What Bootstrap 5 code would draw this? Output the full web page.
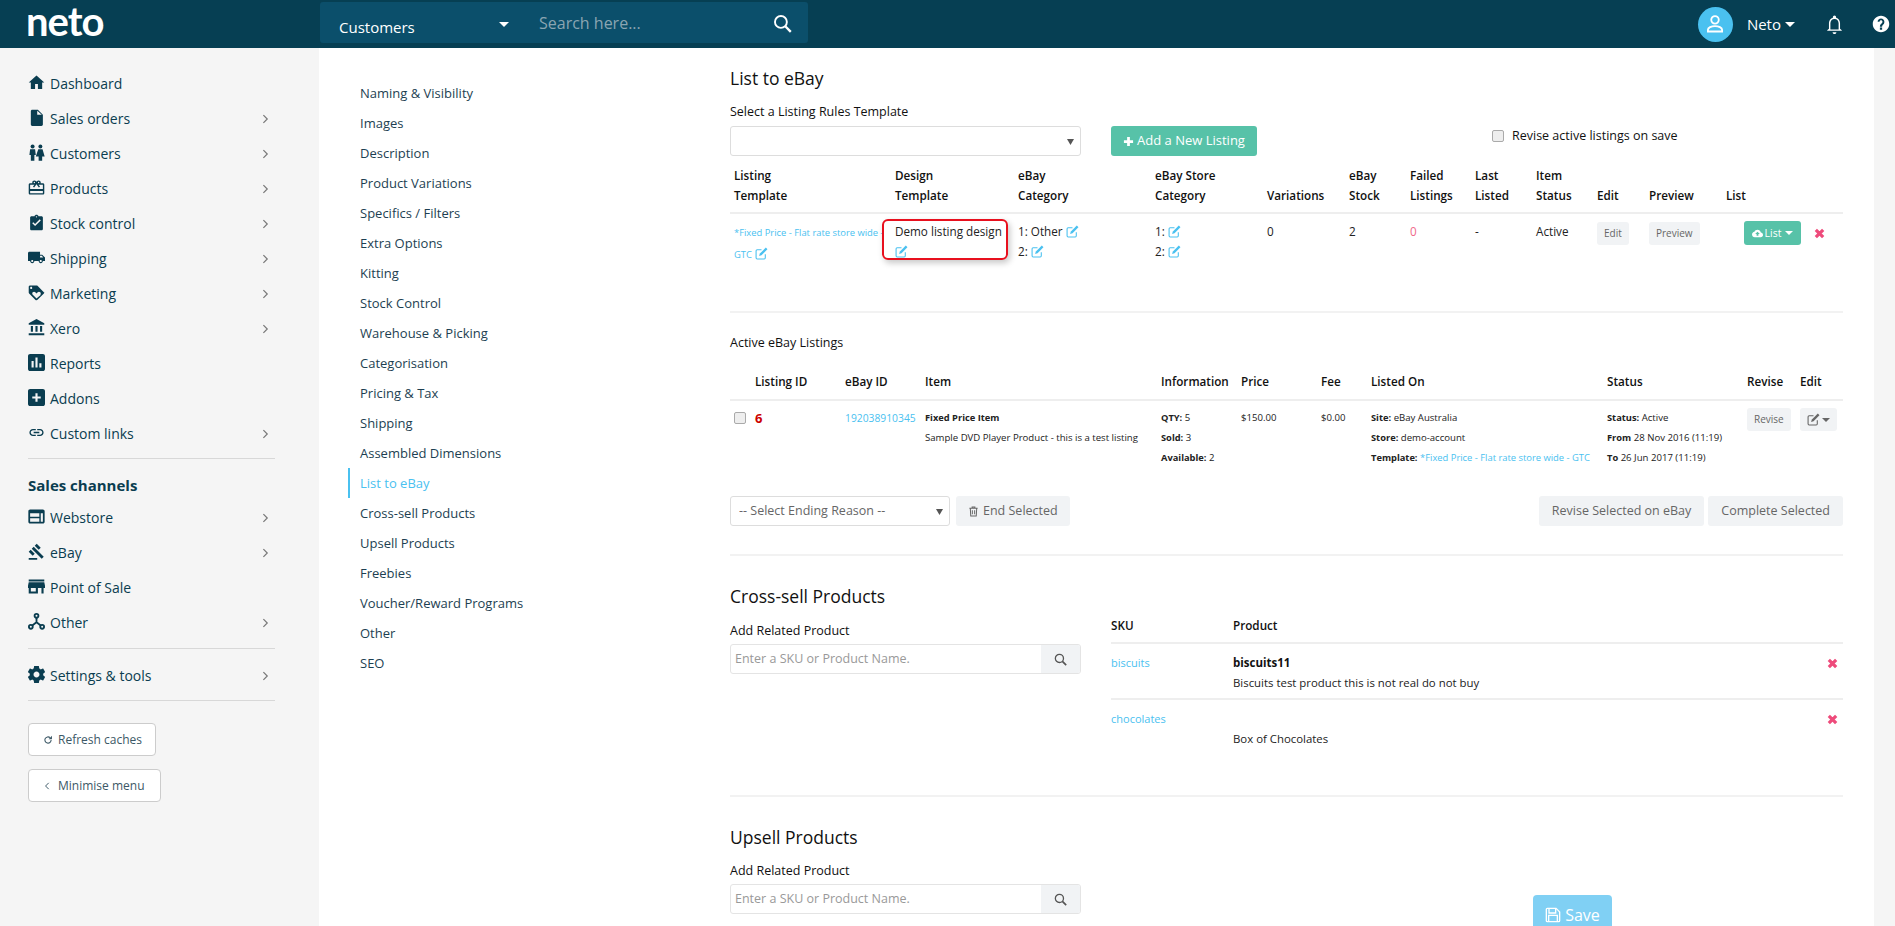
<!DOCTYPE html>
<html lang="en">
<head>
<meta charset="utf-8">
<title>Neto</title>
<link href="https://cdn.jsdelivr.net/npm/bootstrap@5.3.0/dist/css/bootstrap.min.css" rel="stylesheet">
<style>
body{font-family:"Open Sans","Noto Sans",sans-serif;font-size:13px;color:#222;background:#fff;height:926px}
svg{fill:currentColor;flex:none}
.top-bar{background:#063f53;height:48px;padding:0;flex-wrap:nowrap;justify-content:flex-start;align-items:flex-start}
.brand-word{width:320px;padding-left:26px;font-family:"Lato",sans-serif;font-weight:700;font-size:40px;line-height:42px;letter-spacing:-1px;color:#fff}
.search-box{width:488px;height:41px;margin-top:2px;background:#0b4f6b;border-radius:3px;color:#fff}
.search-kind{width:203px;padding:14px 0 0 19px;font-size:15px;position:relative}
.kind-caret{position:absolute;left:179px;top:20px;border:5px solid transparent;border-top-color:#fff;border-bottom:0}
.search-ph{font-size:16px;line-height:42px;color:#8aa5b2;padding-left:16px}
.search-go{margin:12px 16px 0 0}
.top-right{margin-left:auto;height:48px;color:#fff;padding-right:5px}
.avatar{width:35px;height:35px;border-radius:50%;background:#4ac1f0;margin-right:14px}
.who{font-size:15px}
.caret-w{border:5px solid transparent;border-top-color:#fff;border-bottom:0;margin:0 30px 0 4px}
.bell-ic{margin-right:28px}
.side{width:319px;flex:none;background:#f5f5f5;padding:18px 44px 0 28px;color:#0a3d50;font-size:14px}
.side-item{height:35px;color:#0a3d50;text-decoration:none}
.side-ic{width:17px;height:17px;margin-right:5px;margin-top:-3px}
.side-chev{margin-left:auto;margin-right:6px;color:#777}
.side-rule{border-top:1px solid #d8d8d8}
.rule-a{margin:7px 0 9px}
.rule-b{margin:8px 0 9px}
.rule-c{margin:7px 0 22px}
.side-head{height:32px;font-weight:700;font-size:15px;line-height:34px;color:#0a3d50}
.side-btn{height:33px;background:#fff;border:1px solid #ccc;border-radius:4px;color:#3c5866;font-size:12px;padding:0 13px 0 14px;line-height:31px;display:inline-flex;align-items:center;gap:5px}
.btn-min{padding-right:15px}
.chev-back{margin:0 3px 0 1px}
.side-stack{gap:13px}
.sub-nav{width:411px;flex:none;padding:30px 0 0 29px}
.sub-link{height:30px;line-height:30px;padding-left:10px;border-left:2px solid transparent;color:#1d3f52;text-decoration:none;font-size:13px;display:block}
.sub-link.on{color:#4ac1f0;border-left-color:#4ac1f0}
.page-main{width:1113px;flex:none;padding-top:17px;position:relative}
.gap-right{flex:1;min-width:31px}
.side-gutter{width:21px;flex:none;background:#f5f5f5}
.sec-h{font-size:17.500px;font-weight:500;line-height:26px;color:#111;margin:0}
.fld-label{font-size:12.500px;font-weight:500;line-height:20px;color:#111;margin:0}
.lab-first{margin:11px 0 4px}
.lab-cross{margin:12px 0 3px}
.lab-up{margin:11px 0 3px}
.revise-lab{margin-left:235px;height:20px}
.pick{width:351px;height:30px;border:1px solid #ddd;border-radius:3px;background:#fff url("data:image/svg+xml,%3Csvg xmlns='http://www.w3.org/2000/svg' width='7' height='7'%3E%3Cpath d='M0 1h7L3.500 7z' fill='%23555'/%3E%3C/svg%3E") no-repeat right 6px center;appearance:none;font-size:12.500px;color:#666;padding:0 8px}
.pick-end{width:220px}
.btn-green{background:#57c2a8;color:#fff;border:0;border-radius:3px;height:30px;width:146px;margin-left:30px;font-size:13px;font-weight:500;display:flex;align-items:center;justify-content:center;gap:3px}
.btn-grey{background:#f1f3f5;color:#666;border:0;border-radius:3px;height:30px;font-size:12.500px;padding:0 13px;display:inline-flex;align-items:center;gap:4px}
.btn-end{margin-left:6px;padding:0 12px}
.btn-mini{background:#f1f3f5;color:#666;border:0;border-radius:3px;height:23px;font-size:10px;padding:0 7px;line-height:23px;display:inline-block}
.grid-a .btn-mini{margin-top:1px}
.tick{width:12px;height:12px;background:#eee;border:1px solid #aaa;border-radius:2px;display:inline-block}
.tick-row{margin-top:4px}
.grid-a,.grid-b,.grid-c{table-layout:fixed;margin:0;--bs-table-color:#222;--bs-table-border-color:#eaeaea}
.grid-a{width:1113px;margin-top:9px}
.grid-a th,.grid-a td,.grid-b th,.grid-b td,.grid-c th,.grid-c td{padding:0 4px;line-height:20px;font-size:11.700px;vertical-align:top;border-bottom:0}
.grid-a th,.grid-b th,.grid-c th{font-weight:600;color:#111;vertical-align:bottom}
.grid-a thead th{padding-bottom:7px;border-bottom:2px solid #eee}
.grid-a tbody td{padding-top:7px}
.grid-a col:nth-child(1){width:161px}.grid-a col:nth-child(2){width:123px}.grid-a col:nth-child(3){width:137px}.grid-a col:nth-child(4){width:112px}.grid-a col:nth-child(5){width:82px}.grid-a col:nth-child(6){width:61px}.grid-a col:nth-child(7){width:65px}.grid-a col:nth-child(8){width:61px}.grid-a col:nth-child(9){width:61px}.grid-a col:nth-child(10){width:52px}.grid-a col:nth-child(11){width:77px}.grid-a col:nth-child(12){width:121px}
.grid-b{width:1113px;margin-top:18px}
.grid-b thead th{padding-bottom:8px;border-bottom:2px solid #eee}
.grid-b tbody td{padding-top:7px;font-size:9.600px}
.grid-b b{font-size:9.300px}
.grid-b col:nth-child(1){width:21px}.grid-b col:nth-child(2){width:90px}.grid-b col:nth-child(3){width:80px}.grid-b col:nth-child(4){width:236px}.grid-b col:nth-child(5){width:80px}.grid-b col:nth-child(6){width:80px}.grid-b col:nth-child(7){width:50px}.grid-b col:nth-child(8){width:236px}.grid-b col:nth-child(9){width:140px}.grid-b col:nth-child(10){width:53px}.grid-b col:nth-child(11){width:47px}
.lnk{color:#4ac1f0;text-decoration:none}
.tiny{font-size:9.400px}
.ebay-id{font-size:10.300px}
.tpl-link{font-size:9.400px;white-space:nowrap}
.redtxt{color:#f06a8a}
.id-red{color:#c00;font-weight:700;font-size:13px}
.ed{width:13px;height:13px;color:#4ac1f0;vertical-align:-2px}
.x-ic{width:11px;height:11px;color:#ee4b7b}
.x-shift{margin-left:13px;margin-top:-4px}
.rel-box{position:relative}
.call-out{position:absolute;left:-13px;top:-2px;width:126px;height:41px;border:2px solid #e8101e;border-radius:6px;box-shadow:2px 3px 6px rgba(0,0,0,.22);pointer-events:none}
.btn-list{background:#57c2a8;color:#fff;border:0;border-radius:3px;height:24px;width:57px;font-size:10.500px;display:inline-flex;align-items:center;justify-content:center;gap:2px;margin:0 0 0 18px}
.car{border:4px solid transparent;border-top-color:currentColor;border-bottom:0;margin-left:2px}
.sec-rule{border-top:2px solid #f2f2f2}
.rule-1{margin-top:46px}
.mt-active{margin-top:20px}
.foot-row{margin-top:28px}
.rule-2{margin-top:28px}
.title-cross{margin-top:27px}
.lookup{width:351px;height:30px;border:1px solid #e4e4e4;border-radius:3px;overflow:hidden}
.lookup-in{flex:1;padding-left:4px;font-size:12.500px;line-height:28px;color:#999}
.lookup-btn{width:39px;background:#f1f3f5;color:#555}
.rel-left{width:381px;flex:none}
.grid-c{width:732px;margin-top:6px}
.grid-c col:nth-child(1){width:122px}.grid-c col:nth-child(3){width:40px}
.grid-c th,.grid-c td{padding:0}
.grid-c thead th{padding-bottom:7px;line-height:20px;border-bottom:2px solid #eee}
.grid-c tbody td{padding:8px 0 5px;border-bottom:2px solid #eee}
.grid-c tbody tr:last-child td{border-bottom:0}
.grid-c .lnk{font-size:11px}
.grid-c strong{font-weight:700;font-size:11.500px;color:#111}
.grid-c .desc{font-size:11.400px;color:#222;display:block}
.grid-c .end-x{text-align:right;padding-right:5px}
.rule-3{margin-top:41px}
.up-title{margin-top:27px}
.save-float{position:absolute;left:803px;top:847px;width:79px;height:40px;background:#80d0f4;color:#fff;border:0;border-radius:4px;font-size:16px;font-weight:500;display:flex;align-items:center;justify-content:center;gap:4px}
</style>
</head>
<body class="d-flex flex-column overflow-hidden">
<svg width="0" height="0" class="position-absolute">
<defs>
<symbol id="i-home" viewBox="0 0 24 24"><path d="M10 21v-7h4v7h6v-9h3L12 2 1 12h3v9z"/></symbol>
<symbol id="i-doc" viewBox="0 0 24 24"><path d="M14 1H6c-1.100 0-2 .9-2 2v19c0 1.100.9 2 2 2h13c1.100 0 2-.9 2-2V8zm-1 7V2.500L19.500 8z"/></symbol>
<symbol id="i-people" viewBox="0 0 24 24"><circle cx="6.500" cy="3.500" r="2.800"/><circle cx="17.500" cy="3.500" r="2.800"/><path d="M3 7.500h7l1 8H9v8H4v-8H2zM14.500 7.500h6l3 10h-3.500v6h-5v-6H11z"/></symbol>
<symbol id="i-gift" viewBox="0 0 24 24"><path d="M20 6h-2.180c.11-.31.18-.65.18-1 0-1.660-1.340-3-3-3-1.050 0-1.960.54-2.500 1.350l-.5.67-.5-.68C10.960 2.540 10.050 2 9 2 7.340 2 6 3.340 6 5c0 .35.07.69.18 1H3C1.900 6 1 6.890 1 8v12c0 1.110.89 2 2 2h18c1.100 0 2-.89 2-2V8c0-1.110-.89-2-2-2zm-5-2c.55 0 1 .45 1 1s-.45 1-1 1-1-.45-1-1 .45-1 1-1zM9 4c.55 0 1 .45 1 1s-.45 1-1 1-1-.45-1-1 .45-1 1-1zm12 16H3v-3h18v3zm0-6H3V8h6.080L7 10.830 8.620 12 11 8.760l1-1.360 1 1.360L15.380 12 17 10.830 14.920 8H21v6z"/></symbol>
<symbol id="i-check" viewBox="0 0 24 24"><path d="M19 3h-4.180C14.400 1.840 13.300 1 12 1c-1.300 0-2.400.84-2.820 2H5c-1.100 0-2 .9-2 2v16c0 1.100.9 2 2 2h14c1.100 0 2-.9 2-2V5c0-1.100-.9-2-2-2zm-7 0c.55 0 1 .45 1 1s-.45 1-1 1-1-.45-1-1 .45-1 1-1zm-2 14l-4-4 1.410-1.410L10 14.170l6.590-6.590L18 9z"/></symbol>
<symbol id="i-truck" viewBox="0 0 24 24"><path d="M20 8h-3V4H2C.9 4 0 4.900 0 6v11h3c0 1.660 1.340 3 3 3s3-1.340 3-3h6c0 1.660 1.340 3 3 3s3-1.340 3-3h3v-5zM6 18.500c-.83 0-1.500-.67-1.500-1.500s.67-1.500 1.500-1.500 1.500.67 1.500 1.500-.67 1.500-1.500 1.500zm13.500-9l1.960 2.500H17V9.500zm-1.500 9c-.83 0-1.500-.67-1.500-1.500s.67-1.500 1.500-1.500 1.500.67 1.500 1.500-.67 1.500-1.500 1.500z"/></symbol>
<symbol id="i-tag" viewBox="0 0 24 24"><path d="M23.410 12.580l-10-10C13.050 2.220 12.550 2 12 2H3C1.900 2 1 2.900 1 4v8c0 .55.22 1.050.59 1.420l9 9c.36.36.86.58 1.410.58s1.050-.22 1.410-.59l9-9c.37-.36.59-.86.59-1.410s-.23-1.060-.59-1.420zM4.500 7C3.670 7 3 6.330 3 5.500S3.670 4 4.500 4 6 4.670 6 5.500 5.330 7 4.500 7zm13.770 8.270L12 20.540l-5.270-5.270C6.280 14.810 6 14.190 6 13.500c0-1.380 1.120-2.500 2.500-2.500.69 0 1.320.28 1.770.74L12 13.460l1.730-1.730c.45-.45 1.080-.73 1.770-.73 1.380 0 2.500 1.120 2.500 2.500 0 .69-.28 1.320-.73 1.770z"/></symbol>
<symbol id="i-bank" viewBox="0 0 24 24"><path d="M4 10v8h3v-8zm6.500 0v8h3v-8zM1 23h22v-3H1zm16-13v8h3v-8zM12 0L1 6v2h22V6z"/></symbol>
<symbol id="i-bars" viewBox="0 0 24 24"><path d="M21 0H3C1.300 0 0 1.300 0 3v18c0 1.700 1.300 3 3 3h18c1.700 0 3-1.300 3-3V3c0-1.700-1.300-3-3-3zM8 19H5v-9h3zm5.500 0h-3V5h3zm5.500 0h-3v-6h3z"/></symbol>
<symbol id="i-plusbox" viewBox="0 0 24 24"><path d="M21 0H3C1.300 0 0 1.300 0 3v18c0 1.700 1.300 3 3 3h18c1.700 0 3-1.300 3-3V3c0-1.700-1.300-3-3-3zm-3 13.500h-4.500V18h-3v-4.500H6v-3h4.500V6h3v4.500H18z"/></symbol>
<symbol id="i-link" viewBox="0 0 24 24"><path d="M3.900 12c0-1.710 1.390-3.100 3.100-3.100h4V7H7c-2.760 0-5 2.240-5 5s2.240 5 5 5h4v-1.900H7c-1.710 0-3.100-1.390-3.100-3.100zM8 13h8v-2H8zm9-6h-4v1.900h4c1.710 0 3.100 1.390 3.100 3.100s-1.390 3.100-3.100 3.100h-4V17h4c2.760 0 5-2.240 5-5s-2.240-5-5-5z"/></symbol>
<symbol id="i-web" viewBox="0 0 24 24"><path d="M21 2H3C1.600 2 .5 3.100.5 4.500v15C.5 20.900 1.600 22 3 22h18c1.400 0 2.500-1.100 2.500-2.500v-15C23.500 3.100 22.400 2 21 2zm-5 17.500H3v-5h13zm0-7H3v-5h13zm5 7h-3v-12h3z"/></symbol>
<symbol id="i-gavel" viewBox="0 0 24 24"><path d="M1 21h12v2.500H1zM5.250 8.070l2.830-2.830 14.140 14.150-2.830 2.830zM12.320 1l5.650 5.660-2.830 2.830-5.650-5.660zM3.830 9.490l5.650 5.650-2.830 2.830L1 12.320z"/></symbol>
<symbol id="i-store" viewBox="0 0 24 24"><path d="M23 2H1v3h22zm1 12v-3l-1-5H1l-1 5v3h1v8h13v-8h5v8h3v-8zm-13 5H4v-5h7z"/></symbol>
<symbol id="i-hub" viewBox="0 0 24 24"><g fill="none" stroke="currentColor" stroke-width="2.600"><circle cx="12" cy="4" r="2.700"/><circle cx="4" cy="19.500" r="2.700"/><circle cx="20" cy="19.500" r="2.700"/><path d="M12 7v6M12 13l-6 4.500M12 13l6 4.500"/></g></symbol>
<symbol id="i-gear" viewBox="0 0 24 24"><path d="M21.400 13.200c.07-.4.100-.8.100-1.200s-.03-.8-.1-1.200l2.500-2c.2-.2.300-.5.100-.8l-2.400-4.100c-.1-.3-.4-.4-.7-.3l-3 1.200c-.6-.5-1.300-.9-2-1.200l-.5-3.200C15.400.2 15.100 0 14.800 0H9.200c-.3 0-.6.2-.6.500l-.5 3.200c-.7.3-1.400.7-2 1.200l-3-1.200c-.3-.1-.6 0-.7.300L0 8.100c-.2.300-.1.600.1.800l2.500 2c-.07.300-.1.700-.1 1.100s.03.800.1 1.200l-2.500 2c-.2.200-.3.500-.1.800l2.400 4.100c.1.300.4.400.7.300l3-1.200c.6.500 1.300.9 2 1.200l.5 3.200c.1.300.3.500.6.500h5.600c.3 0 .6-.2.600-.5l.5-3.200c.7-.3 1.400-.7 2-1.200l3 1.200c.3.100.6 0 .7-.3l2.400-4.100c.2-.3.100-.6-.1-.8zM12 16.200c-2.300 0-4.200-1.900-4.200-4.200s1.900-4.200 4.200-4.200 4.200 1.900 4.200 4.200-1.900 4.200-4.200 4.200z"/></symbol>
<symbol id="i-chev" viewBox="0 0 10 14"><path d="M2 1.500L7.500 7 2 12.500" fill="none" stroke="currentColor" stroke-width="1.700"/></symbol>
<symbol id="i-chevl" viewBox="0 0 10 14"><path d="M8 1.500L2.500 7 8 12.500" fill="none" stroke="currentColor" stroke-width="1.700"/></symbol>
<symbol id="i-search" viewBox="0 0 24 24"><g fill="none" stroke="currentColor" stroke-width="2.400"><circle cx="10" cy="10" r="7.500"/><path d="M15.500 15.500L22.500 22.500" stroke-width="3"/></g></symbol>
<symbol id="i-bell" viewBox="0 0 24 24"><path d="M12 24c1.300 0 2.400-1 2.400-2.300H9.600c0 1.300 1.100 2.300 2.400 2.300zm7-6.500v-7c0-3.400-1.800-6.200-5-7V2.500c0-1-.9-2-2-2s-2 1-2 2v1c-3.200.8-5 3.600-5 7v7l-2.200 1.800V20h18.400v-.7zm-1.800.8H6.800v-7.800c0-3 1.800-5.500 5.200-5.500s5.200 2.500 5.200 5.500z"/></symbol>
<symbol id="i-help" viewBox="0 0 24 24"><path d="M12 1C5.900 1 1 5.900 1 12s4.900 11 11 11 11-4.900 11-11S18.100 1 12 1zm1.500 18.500h-3v-3h3zm2.500-7.700l-1 1c-.9.800-1.500 1.500-1.500 3h-3v-.6c0-1.200.6-2.300 1.400-3.100l1.500-1.500c.4-.4.600-.9.600-1.500 0-1.100-1-2-2-2s-2 .9-2 2H7.500c0-2.500 2-4.500 4.500-4.500s4.500 2 4.500 4.500c0 1-.2 1.600-.5 2.200z"/></symbol>
<symbol id="i-user" viewBox="0 0 24 24"><g fill="none" stroke="currentColor" stroke-width="2.200"><circle cx="12" cy="7" r="4.500"/><path d="M3.500 21v-2c0-2.500 4-4.500 8.500-4.500s8.500 2 8.500 4.500v2z"/></g></symbol>
<symbol id="i-edit" viewBox="0 0 24 24"><path d="M19 13.500V20a2 2 0 0 1-2 2H4a2 2 0 0 1-2-2V7a2 2 0 0 1 2-2h8" fill="none" stroke="currentColor" stroke-width="2"/><path d="M20 1l3 3-11 11-4.500 1.500L9 12z"/></symbol>
<symbol id="i-x" viewBox="0 0 24 24"><path d="M4 4l16 16M20 4L4 20" fill="none" stroke="currentColor" stroke-width="7"/></symbol>
<symbol id="i-cloud" viewBox="0 0 24 24"><path d="M19.350 10.040C18.670 6.590 15.640 4 12 4 9.110 4 6.600 5.640 5.350 8.040 2.340 8.360 0 10.910 0 14c0 3.310 2.690 6 6 6h13c2.760 0 5-2.240 5-5 0-2.640-2.050-4.780-4.650-4.960zM14 13v4h-4v-4H7l5-5 5 5z"/></symbol>
<symbol id="i-plus" viewBox="0 0 24 24"><path d="M9 2h6v7h7v6h-7v7H9v-7H2V9h7z"/></symbol>
<symbol id="i-trash" viewBox="0 0 24 24"><path d="M3 5h18M9 5V2h6v3M5 5l1 17h12l1-17M9.500 9v9M14.500 9v9" fill="none" stroke="currentColor" stroke-width="2.200"/></symbol>
<symbol id="i-save" viewBox="0 0 24 24"><path d="M17 1H3.500A2.500 2.500 0 0 0 1 3.500v17A2.500 2.500 0 0 0 3.500 23h17a2.500 2.500 0 0 0 2.500-2.500V7zM7 3h8v5H7zm-.5 18v-7.500h11V21zm14.500 0h-1.500v-9.500h-15V21H3V3h2v7h12V3.500l4 4.500z"/></symbol>
<symbol id="i-refresh" viewBox="0 0 24 24"><path d="M19.500 12a7.500 7.500 0 1 1-2.500-5.600" fill="none" stroke="currentColor" stroke-width="2.600"/><path d="M21.500 2v8h-8z"/></symbol>
</defs>
</svg>

<nav class="navbar top-bar">
  <div class="brand-word">neto</div>
  <div class="search-box d-flex">
    <div class="search-kind">Customers<span class="kind-caret"></span></div>
    <div class="search-ph flex-grow-1">Search here...</div>
    <svg width="19" height="19" class="search-go"><use href="#i-search"/></svg>
  </div>
  <div class="top-right d-flex align-items-center">
    <span class="avatar d-flex align-items-center justify-content-center"><svg width="20" height="20"><use href="#i-user"/></svg></span>
    <span class="who">Neto</span><span class="caret-w"></span>
    <svg width="19" height="19" class="bell-ic"><use href="#i-bell"/></svg>
    <svg width="18" height="18"><use href="#i-help"/></svg>
  </div>
</nav>

<div class="d-flex flex-grow-1 overflow-hidden">
  <aside class="side">
    <a class="side-item d-flex align-items-center" href="#"><svg class="side-ic"><use href="#i-home"/></svg>Dashboard</a>
    <a class="side-item d-flex align-items-center" href="#"><svg class="side-ic"><use href="#i-doc"/></svg>Sales orders<svg class="side-chev" width="7" height="10"><use href="#i-chev"/></svg></a>
    <a class="side-item d-flex align-items-center" href="#"><svg class="side-ic"><use href="#i-people"/></svg>Customers<svg class="side-chev" width="7" height="10"><use href="#i-chev"/></svg></a>
    <a class="side-item d-flex align-items-center" href="#"><svg class="side-ic"><use href="#i-gift"/></svg>Products<svg class="side-chev" width="7" height="10"><use href="#i-chev"/></svg></a>
    <a class="side-item d-flex align-items-center" href="#"><svg class="side-ic"><use href="#i-check"/></svg>Stock control<svg class="side-chev" width="7" height="10"><use href="#i-chev"/></svg></a>
    <a class="side-item d-flex align-items-center" href="#"><svg class="side-ic"><use href="#i-truck"/></svg>Shipping<svg class="side-chev" width="7" height="10"><use href="#i-chev"/></svg></a>
    <a class="side-item d-flex align-items-center" href="#"><svg class="side-ic"><use href="#i-tag"/></svg>Marketing<svg class="side-chev" width="7" height="10"><use href="#i-chev"/></svg></a>
    <a class="side-item d-flex align-items-center" href="#"><svg class="side-ic"><use href="#i-bank"/></svg>Xero<svg class="side-chev" width="7" height="10"><use href="#i-chev"/></svg></a>
    <a class="side-item d-flex align-items-center" href="#"><svg class="side-ic"><use href="#i-bars"/></svg>Reports</a>
    <a class="side-item d-flex align-items-center" href="#"><svg class="side-ic"><use href="#i-plusbox"/></svg>Addons</a>
    <a class="side-item d-flex align-items-center" href="#"><svg class="side-ic"><use href="#i-link"/></svg>Custom links<svg class="side-chev" width="7" height="10"><use href="#i-chev"/></svg></a>
    <div class="side-rule rule-a"></div>
    <div class="side-head">Sales channels</div>
    <a class="side-item d-flex align-items-center" href="#"><svg class="side-ic"><use href="#i-web"/></svg>Webstore<svg class="side-chev" width="7" height="10"><use href="#i-chev"/></svg></a>
    <a class="side-item d-flex align-items-center" href="#"><svg class="side-ic"><use href="#i-gavel"/></svg>eBay<svg class="side-chev" width="7" height="10"><use href="#i-chev"/></svg></a>
    <a class="side-item d-flex align-items-center" href="#"><svg class="side-ic"><use href="#i-store"/></svg>Point of Sale</a>
    <a class="side-item d-flex align-items-center" href="#"><svg class="side-ic"><use href="#i-hub"/></svg>Other<svg class="side-chev" width="7" height="10"><use href="#i-chev"/></svg></a>
    <div class="side-rule rule-b"></div>
    <a class="side-item d-flex align-items-center" href="#"><svg class="side-ic"><use href="#i-gear"/></svg>Settings &amp; tools<svg class="side-chev" width="7" height="10"><use href="#i-chev"/></svg></a>
    <div class="side-rule rule-c"></div>
    <div class="d-flex flex-column align-items-start side-stack">
      <button class="side-btn"><svg width="10" height="10"><use href="#i-refresh"/></svg>Refresh caches</button>
      <button class="side-btn btn-min"><svg class="chev-back" width="6" height="8"><use href="#i-chevl"/></svg>Minimise menu</button>
    </div>
  </aside>

  <nav class="sub-nav">
    <a class="sub-link" href="#">Naming &amp; Visibility</a>
    <a class="sub-link" href="#">Images</a>
    <a class="sub-link" href="#">Description</a>
    <a class="sub-link" href="#">Product Variations</a>
    <a class="sub-link" href="#">Specifics / Filters</a>
    <a class="sub-link" href="#">Extra Options</a>
    <a class="sub-link" href="#">Kitting</a>
    <a class="sub-link" href="#">Stock Control</a>
    <a class="sub-link" href="#">Warehouse &amp; Picking</a>
    <a class="sub-link" href="#">Categorisation</a>
    <a class="sub-link" href="#">Pricing &amp; Tax</a>
    <a class="sub-link" href="#">Shipping</a>
    <a class="sub-link" href="#">Assembled Dimensions</a>
    <a class="sub-link on" href="#">List to eBay</a>
    <a class="sub-link" href="#">Cross-sell Products</a>
    <a class="sub-link" href="#">Upsell Products</a>
    <a class="sub-link" href="#">Freebies</a>
    <a class="sub-link" href="#">Voucher/Reward Programs</a>
    <a class="sub-link" href="#">Other</a>
    <a class="sub-link" href="#">SEO</a>
  </nav>

  <main class="page-main">
    <h2 class="sec-h">List to eBay</h2>
    <p class="fld-label lab-first">Select a Listing Rules Template</p>
    <div class="d-flex">
      <select class="pick"><option></option></select>
      <button class="btn-green"><svg width="11" height="11"><use href="#i-plus"/></svg>Add a New Listing</button>
      <label class="d-flex align-items-center gap-2 fld-label revise-lab"><span class="tick"></span>Revise active listings on save</label>
    </div>
    <table class="table grid-a">
      <colgroup><col><col><col><col><col><col><col><col><col><col><col><col></colgroup>
      <thead><tr><th>Listing<br>Template</th><th>Design<br>Template</th><th>eBay<br>Category</th><th>eBay Store<br>Category</th><th>Variations</th><th>eBay<br>Stock</th><th>Failed<br>Listings</th><th>Last<br>Listed</th><th>Item<br>Status</th><th>Edit</th><th>Preview</th><th>List</th></tr></thead>
      <tbody><tr>
        <td><a class="lnk tiny" href="#">*Fixed Price - Flat rate store wide - GTC</a> <svg class="ed"><use href="#i-edit"/></svg></td>
        <td><div class="rel-box">Demo listing design <svg class="ed"><use href="#i-edit"/></svg><span class="call-out"></span></div></td>
        <td>1: Other <svg class="ed"><use href="#i-edit"/></svg><br>2: <svg class="ed"><use href="#i-edit"/></svg></td>
        <td>1: <svg class="ed"><use href="#i-edit"/></svg><br>2: <svg class="ed"><use href="#i-edit"/></svg></td>
        <td>0</td><td>2</td><td class="redtxt">0</td><td>-</td><td>Active</td>
        <td><span class="btn-mini">Edit</span></td>
        <td><span class="btn-mini">Preview</span></td>
        <td class="text-nowrap"><button class="btn-list"><svg width="11" height="11"><use href="#i-cloud"/></svg>List<span class="car"></span></button><svg class="x-ic x-shift"><use href="#i-x"/></svg></td>
      </tr></tbody>
    </table>
    <div class="sec-rule rule-1"></div>

    <p class="fld-label mt-active">Active eBay Listings</p>
    <table class="table grid-b">
      <colgroup><col><col><col><col><col><col><col><col><col><col><col></colgroup>
      <thead><tr><th></th><th>Listing ID</th><th>eBay ID</th><th>Item</th><th>Information</th><th>Price</th><th>Fee</th><th>Listed On</th><th>Status</th><th>Revise</th><th>Edit</th></tr></thead>
      <tbody><tr>
        <td><span class="tick tick-row"></span></td>
        <td><span class="id-red">6</span></td>
        <td><a class="lnk ebay-id" href="#">192038910345</a></td>
        <td><b>Fixed Price Item</b><br>Sample DVD Player Product - this is a test listing</td>
        <td><b>QTY:</b> 5<br><b>Sold:</b> 3<br><b>Available:</b> 2</td>
        <td>$150.00</td>
        <td>$0.00</td>
        <td><b>Site:</b> eBay Australia<br><b>Store:</b> demo-account<br><b>Template:</b> <a class="lnk tpl-link" href="#">*Fixed Price - Flat rate store wide - GTC</a></td>
        <td><b>Status:</b> Active<br><b>From</b> 28 Nov 2016 (11:19)<br><b>To</b> 26 Jun 2017 (11:19)</td>
        <td><span class="btn-mini">Revise</span></td>
        <td><span class="btn-mini d-inline-flex align-items-center"><svg width="13" height="13"><use href="#i-edit"/></svg><span class="car"></span></span></td>
      </tr></tbody>
    </table>
    <div class="d-flex align-items-center foot-row">
      <select class="pick pick-end"><option>-- Select Ending Reason --</option></select>
      <button class="btn-grey btn-end"><svg width="11" height="11"><use href="#i-trash"/></svg>End Selected</button>
      <button class="btn-grey ms-auto">Revise Selected on eBay</button>
      <button class="btn-grey ms-1">Complete Selected</button>
    </div>
    <div class="sec-rule rule-2"></div>

    <h2 class="sec-h title-cross">Cross-sell Products</h2>
    <div class="d-flex">
      <div class="rel-left">
        <p class="fld-label lab-cross">Add Related Product</p>
        <div class="lookup d-flex"><div class="lookup-in">Enter a SKU or Product Name.</div><div class="lookup-btn d-flex align-items-center justify-content-center"><svg width="13" height="13"><use href="#i-search"/></svg></div></div>
      </div>
      <table class="table grid-c">
        <colgroup><col><col><col></colgroup>
        <thead><tr><th>SKU</th><th>Product</th><th></th></tr></thead>
        <tbody>
          <tr><td><a class="lnk" href="#">biscuits</a></td><td><strong>biscuits11</strong><span class="desc">Biscuits test product this is not real do not buy</span></td><td class="end-x"><svg class="x-ic"><use href="#i-x"/></svg></td></tr>
          <tr><td><a class="lnk" href="#">chocolates</a></td><td><strong>&nbsp;</strong><span class="desc">Box of Chocolates</span></td><td class="end-x"><svg class="x-ic"><use href="#i-x"/></svg></td></tr>
        </tbody>
      </table>
    </div>
    <div class="sec-rule rule-3"></div>

    <h2 class="sec-h up-title">Upsell Products</h2>
    <p class="fld-label lab-up">Add Related Product</p>
    <div class="lookup d-flex"><div class="lookup-in">Enter a SKU or Product Name.</div><div class="lookup-btn d-flex align-items-center justify-content-center"><svg width="13" height="13"><use href="#i-search"/></svg></div></div>
    <button class="save-float"><svg width="16" height="16"><use href="#i-save"/></svg>Save</button>
  </main>
  <div class="gap-right"></div>
  <div class="side-gutter"></div>
</div>
<script src="https://cdn.jsdelivr.net/npm/bootstrap@5.3.0/dist/js/bootstrap.bundle.min.js"></script>
</body>
</html>
